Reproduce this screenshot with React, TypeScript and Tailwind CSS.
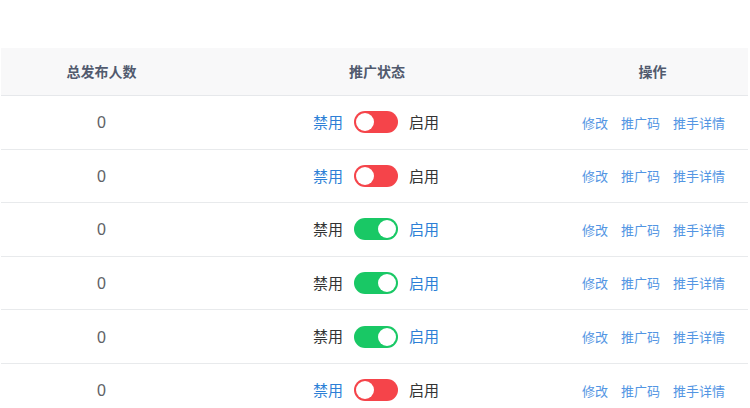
import React from "react";

const rows = [false, false, true, true, true, false];

function Toggle({ on }: { on: boolean }) {
  return (
    <div
      className={`relative h-[22px] w-[44px] rounded-full ${on ? "bg-[#19c865]" : "bg-[#f5444a]"}`}
    >
      <div
        className={`absolute top-[2px] h-[18px] w-[18px] rounded-full bg-white ${on ? "left-[24px]" : "left-[2px]"}`}
      />
    </div>
  );
}

export default function App() {
  return (
    <div
      className="h-[408px] w-[750px] overflow-hidden bg-white pt-[48px]"
      style={{ fontFamily: '"Noto Sans CJK SC", "Noto Sans", sans-serif' }}
    >
      <div className="ml-[1px] w-[747px]">
        <div className="grid h-[48px] grid-cols-[201px_350px_196px] items-center border-b border-[#e6e8eb] bg-[#f8f8f9] text-[14px] font-semibold text-[#515a6e]">
          <div className="text-center">总发布人数</div>
          <div className="text-center">推广状态</div>
          <div className="pl-[5px] text-center">操作</div>
        </div>
        {rows.map((on, i) => (
          <div
            key={i}
            className="grid h-[53.6px] grid-cols-[201px_350px_196px] items-center border-b border-[#e8eaec]"
          >
            <div
              className="pt-[2px] text-center text-[16px] text-[#606266]"
              style={{ fontFamily: '"Liberation Sans", sans-serif' }}
            >
              0
            </div>
            <div className="flex items-center justify-center pr-[2px] text-[15px]">
              <span className={on ? "text-[#333]" : "text-[#2d7fd6]"}>禁用</span>
              <div className="mx-[11px]">
                <Toggle on={on} />
              </div>
              <span className={on ? "text-[#2d7fd6]" : "text-[#333]"}>启用</span>
            </div>
            <div className="flex items-center justify-center gap-[13px] pl-[7px] text-[13px] text-[#5295e3]">
              <span>修改</span>
              <span>推广码</span>
              <span>推手详情</span>
            </div>
          </div>
        ))}
      </div>
    </div>
  );
}
